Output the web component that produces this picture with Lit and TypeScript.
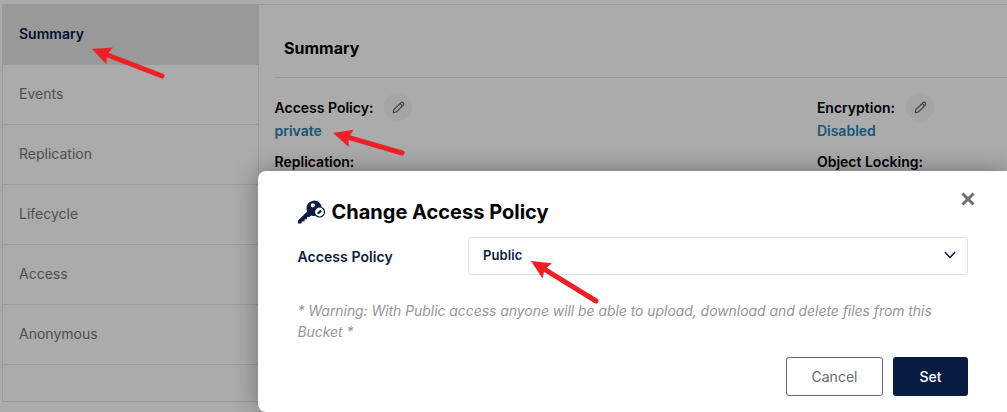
import { LitElement, html, css, svg } from "lit";
import { customElement } from "lit/decorators.js";

const tabs = ["Summary", "Events", "Replication", "Lifecycle", "Access", "Anonymous"];

const pencil = html`<svg viewBox="0 0 12 12" width="13" height="13" fill="none" stroke="#555" stroke-width="1" stroke-linejoin="round">
  <path d="M1.2 10.8 L1.8 8 L8.4 1.4 Q9.2 .7 10 1.4 L10.6 2 Q11.3 2.8 10.6 3.6 L4 10.2 Z" />
  <path d="M7.4 2.4 L9.6 4.6" />
</svg>`;

// red annotation arrows, [tail x, tail y, tip x, tip y]
const arrows = [
  [162, 76, 92, 49],
  [402, 153, 333, 133],
  [596, 301, 531, 261],
];

function arrow(a: number[]) {
  const [x1, y1, x2, y2] = a;
  const len = Math.hypot(x2 - x1, y2 - y1);
  const ux = (x2 - x1) / len;
  const uy = (y2 - y1) / len;
  const bx = x2 - ux * 19;
  const by = y2 - uy * 19;
  const nx = -uy * 9;
  const ny = ux * 9;
  const neckx = x2 - ux * 16;
  const necky = y2 - uy * 16;
  return svg`
    <line x1=${x1} y1=${y1} x2=${neckx} y2=${necky} stroke="#ee2027" stroke-width="5" stroke-linecap="round" />
    <polygon fill="#ee2027" points="${x2},${y2} ${bx + nx},${by + ny} ${neckx},${necky} ${bx - nx},${by - ny}" />`;
}

@customElement("app-root")
export class AppRoot extends LitElement {
  static styles = css`
    :host {
      display: block;
      position: relative;
      width: 1007px;
      height: 412px;
      overflow: hidden;
      background: #fff;
      font-family: Inter, "Liberation Sans", sans-serif;
      color: #000;
    }
    .page {
      display: flex;
      height: 396px;
      margin: 4px 0 0 2px;
      border: 1px solid #e5e5e5;
      border-right: none;
    }
    .side {
      width: 255px;
      flex: none;
      border-right: 1px solid #e5e5e5;
    }
    .tab {
      padding: 0 0 2px 16px;
      height: 57px;
      display: flex;
      align-items: center;
      font-size: 14px;
      color: #777;
      border-bottom: 1px solid #e5e5e5;
    }
    .tab.on {
      background: #e5e5e5;
      color: #081c42;
      font-weight: 600;
    }
    .main {
      flex: 1;
      padding-left: 15.5px;
    }
    .heading {
      height: 73px;
      padding: 13px 0 0 9.5px;
      box-sizing: border-box;
      display: flex;
      align-items: center;
      font-size: 16px;
      font-weight: 700;
      border-bottom: 1px solid #e2e2e2;
    }
    .grid {
      display: flex;
      justify-content: space-between;
      padding-right: 73px;
    }
    .label-row {
      display: flex;
      align-items: center;
      gap: 11px;
      height: 28px;
      margin-top: 15px;
      font-size: 14px;
      font-weight: 600;
    }
    .edit {
      width: 28px;
      height: 28px;
      border-radius: 50%;
      background: #f6f6f6;
      display: flex;
      align-items: center;
      justify-content: center;
    }
    .value {
      font-size: 14px;
      font-weight: 600;
      color: #2781b0;
      line-height: 17px;
      margin-top: 1px;
    }
    .sub {
      font-size: 14px;
      font-weight: 600;
      line-height: 17px;
      margin-top: 14px;
    }
    .shade {
      position: absolute;
      inset: 0;
      background: rgba(0, 0, 0, 0.33);
    }
    .modal {
      position: absolute;
      left: 258px;
      top: 171px;
      width: 749px;
      height: 241px;
      box-sizing: border-box;
      padding: 28px 39px 0 39.5px;
      background: #fff;
      border-radius: 8px 0 0 8px;
      box-shadow: 0 0 24px rgba(0, 0, 0, 0.35);
    }
    .close {
      position: absolute;
      right: 32px;
      top: 21px;
      width: 14px;
      height: 14px;
    }
    .title {
      display: flex;
      align-items: center;
      gap: 7px;
      height: 26px;
      font-size: 20px;
      font-weight: 700;
      color: #000;
    }
    .title svg {
      flex: none;
    }
    .field {
      display: flex;
      align-items: center;
      margin-top: 12px;
      height: 38px;
    }
    .field label {
      width: 170.5px;
      flex: none;
      font-size: 14px;
      font-weight: 600;
      letter-spacing: 0.07px;
      color: #081c42;
    }
    .select {
      flex: 1;
      height: 38px;
      box-sizing: border-box;
      display: flex;
      align-items: center;
      justify-content: space-between;
      padding: 0 11px 2px 14px;
      border: 1px solid #e2e2e2;
      border-radius: 3px;
      font-size: 13px;
      font-weight: 600;
      letter-spacing: 0.1px;
      color: #081c42;
    }
    .warn {
      margin: 25px 0 0;
      font-size: 14px;
      font-style: italic;
      line-height: 21px;
      letter-spacing: -0.06px;
      color: #969696;
    }
    .actions {
      display: flex;
      justify-content: flex-end;
      gap: 10px;
      margin-top: 15px;
    }
    .btn {
      height: 39px;
      box-sizing: border-box;
      display: flex;
      align-items: center;
      justify-content: center;
      border-radius: 3px;
      font-size: 14px;
      font-weight: 500;
    }
    .cancel {
      width: 97px;
      border: 1px solid #696969;
      color: #696969;
      font-weight: 400;
    }
    .set {
      width: 75px;
      background: #081c42;
      color: #fff;
    }
    .marks {
      position: absolute;
      inset: 0;
      pointer-events: none;
    }
  `;

  render() {
    return html`
      <div class="page">
        <div class="side">
          ${tabs.map((t, i) => html`<div class="tab ${i === 0 ? "on" : ""}">${t}</div>`)}
        </div>
        <div class="main">
          <div class="heading">Summary</div>
          <div class="grid">
            <div>
              <div class="label-row">Access Policy: <span class="edit">${pencil}</span></div>
              <div class="value">private</div>
              <div class="sub">Replication:</div>
            </div>
            <div>
              <div class="label-row">Encryption: <span class="edit">${pencil}</span></div>
              <div class="value">Disabled</div>
              <div class="sub">Object Locking:</div>
            </div>
          </div>
        </div>
      </div>
      <div class="shade"></div>
      <div class="modal">
        <svg class="close" viewBox="0 0 14 14" fill="none" stroke="#707070" stroke-width="3">
          <path d="M1.5 1.5 L12.5 12.5 M12.5 1.5 L1.5 12.5" />
        </svg>
        <div class="title">
          <svg viewBox="0 0 27 24" width="27" height="24">
            <path fill="#081c42" fill-rule="evenodd" d="M0 20.4 L9.2 11.4 A7.7 7.7 0 1 1 13.4 15.4 L11.2 17 L9 17 L9 19.2 L6.6 19.2 L6.6 21.4 L4 21.4 L3.4 23.6 L0 23.6 Z M14.8 3.2 A2.1 2.1 0 1 0 14.9 7.4 A2.1 2.1 0 1 0 14.8 3.2 Z" />
            <circle cx="21.5" cy="12" r="5" fill="#fff" stroke="#081c42" stroke-width="1.2" />
            <path d="M19.3 14.3 L19.8 12.3 L22.4 9.7 L23.9 11.2 L21.3 13.8 Z" fill="#081c42" />
          </svg>
          Change Access Policy
        </div>
        <div class="field">
          <label>Access Policy</label>
          <div class="select">
            Public
            <svg viewBox="0 0 12 8" width="12" height="8" fill="none" stroke="#081c42" stroke-width="1.5">
              <path d="M.8 1 L6 6.4 L11.2 1" />
            </svg>
          </div>
        </div>
        <p class="warn">* Warning: With Public access anyone will be able to upload, download and delete files from this Bucket *</p>
        <div class="actions">
          <div class="btn cancel">Cancel</div>
          <div class="btn set">Set</div>
        </div>
      </div>
      <svg class="marks" viewBox="0 0 1007 412">${arrows.map(arrow)}</svg>
    `;
  }
}
